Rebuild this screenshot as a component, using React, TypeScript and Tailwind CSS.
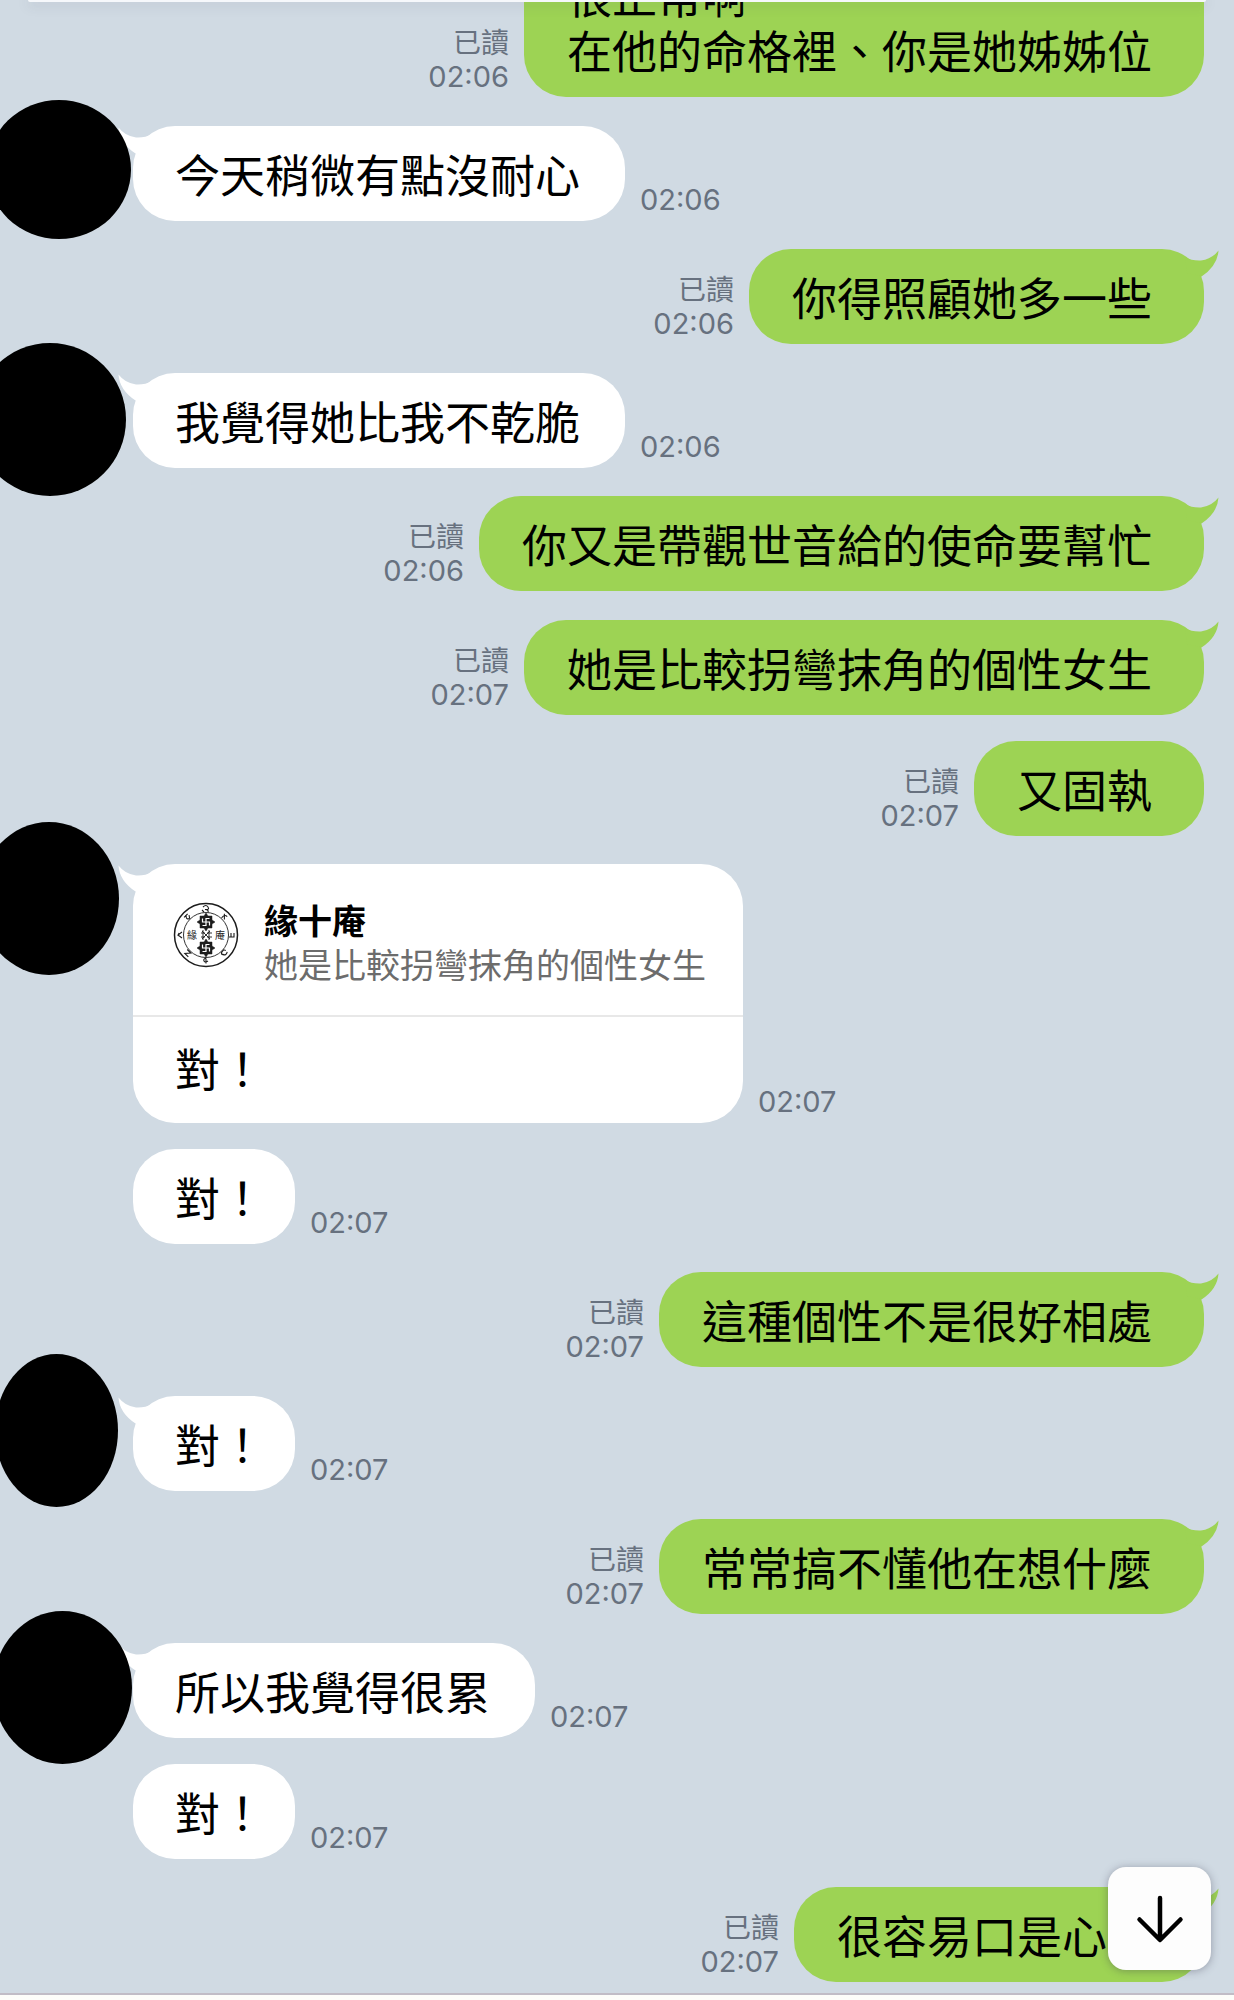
import React from "react";
import { clsx } from "clsx";

type Message = {
  text: string;
  time: string;
  mine?: boolean;
  tail?: boolean;
  gap?: string;
  avatar?: string;
  short?: boolean;
  quote?: { name: string; text: string };
};

const messages: Message[] = [
  { mine: true, text: "很正常啊\n在他的命格裡、你是她姊姊位", time: "02:06" },
  {
    text: "今天稍微有點沒耐心",
    time: "02:06",
    tail: true,
    gap: "mt-[29px]",
    avatar: "-top-[26px] -left-[13px] w-[144px] h-[139px]",
  },
  { mine: true, text: "你得照顧她多一些", time: "02:06", tail: true, gap: "mt-7" },
  {
    text: "我覺得她比我不乾脆",
    time: "02:06",
    tail: true,
    gap: "mt-[29px]",
    avatar: "-top-[30px] -left-[26px] w-[152px] h-[153px]",
  },
  { mine: true, text: "你又是帶觀世音給的使命要幫忙", time: "02:06", tail: true, gap: "mt-7" },
  { mine: true, text: "她是比較拐彎抹角的個性女生", time: "02:07", tail: true, gap: "mt-[29px]" },
  { mine: true, text: "又固執", time: "02:07", gap: "mt-[26px]" },
  {
    text: "對！",
    time: "02:07",
    tail: true,
    gap: "mt-7",
    avatar: "-top-[42px] -left-[21px] w-[140px] h-[153px]",
    quote: { name: "緣十庵", text: "她是比較拐彎抹角的個性女生" },
  },
  { text: "對！", time: "02:07", gap: "mt-[26px]", short: true },
  { mine: true, text: "這種個性不是很好相處", time: "02:07", tail: true, gap: "mt-7" },
  {
    text: "對！",
    time: "02:07",
    tail: true,
    gap: "mt-[29px]",
    short: true,
    avatar: "-top-[42px] -left-[5px] w-[123px] h-[153px]",
  },
  { mine: true, text: "常常搞不懂他在想什麼", time: "02:07", tail: true, gap: "mt-7" },
  {
    text: "所以我覺得很累",
    time: "02:07",
    tail: true,
    gap: "mt-[29px]",
    avatar: "-top-[32px] -left-[7px] w-[139px] h-[153px]",
  },
  { text: "對！", time: "02:07", gap: "mt-[26px]", short: true },
  { mine: true, text: "很容易口是心非", time: "02:07", tail: true, gap: "mt-7" },
];

function Tail({ mine }: { mine?: boolean }) {
  return (
    <svg
      aria-hidden="true"
      viewBox="0 0 40 32"
      className={clsx(
        "absolute top-0 h-8 w-10",
        mine ? "-right-[15px] text-[#9dd354]" : "-left-[15px] -scale-x-100 text-white",
      )}
    >
      <path d="M6 8 Q13 12 22 11.5 Q33 10 39.5 1.5 Q38.500 17 22.500 27.500 L8 24 Z" fill="currentColor" />
    </svg>
  );
}

const sealMarks = [
  "M30 5q3 -3 5 0t-3 2.500q4 0 3 3M31 10l-2 -2",
  "M31 5l4 4M35 5q-4 0 -3 5",
  "M31 5h4v5M31 8h4",
  "M30 6q3 -2 5 1t-4 3l-1 -2M34 6l1.500 3",
  "M33 4.500v5M31 7q3 -2 4 0t-2 3",
  "M30 5h5l-4 4.500h5",
  "M30 9l3 -4l3 4M32 5l3 1",
  "M30 5h5M33 5q-4 3 0 4.500M35 7l-2 3",
];

function Seal() {
  return (
    <svg role="img" aria-label="緣十庵" viewBox="0 0 66 66" className="mt-0.5 size-[66px] shrink-0">
      <g fill="none" stroke="#1c1c1c">
        <circle cx="33" cy="33" r="31.5" strokeWidth="1.5" />
        <circle cx="33" cy="33" r="22.5" strokeWidth="0.9" />
        {sealMarks.map((d, i) => (
          <path key={i} transform={`rotate(${i * 45} 33 33)`} d={d} strokeWidth="1.1" />
        ))}
        {[20, 46].map((y) => (
          <g key={y} transform={`translate(33 ${y})`}>
            <path
              d="M0 -9l2 3h4v4L9 0l-3 2v4h-4L0 9l-2 -3h-4v-4L-9 0l3 -2v-4h4z"
              fill="#1c1c1c"
              strokeWidth="0.5"
            />
            <path d="M-3.500 -3.500v3.500h7v3.500M3.500 -3.500h-3.500v7h-3.500" stroke="#fff" strokeWidth="1.200" />
          </g>
        ))}
        <path
          d="M29 29l8 8M37 29l-8 8M28 31h4M28 35h4M34 31h5M34 35h5M30 28v10M36 28v10"
          strokeWidth="0.9"
        />
      </g>
      <g fontSize="10" fill="#1c1c1c" fontFamily="'Noto Sans CJK TC', sans-serif">
        <text x="14" y="37">緣</text>
        <text x="42" y="37">庵</text>
      </g>
    </svg>
  );
}

function Bubble({ m }: { m: Message }) {
  return (
    <div
      className={clsx(
        "relative rounded-[42px]",
        m.mine ? "bg-[#9dd354]" : "bg-white",
        !m.quote && "pt-[23px] pb-[17px]",
        !m.quote && (m.mine ? "pr-[52px] pl-[43px]" : m.short ? "pr-[30px] pl-[42px]" : "pr-[45px] pl-[42px]"),
      )}
    >
      {m.tail && <Tail mine={m.mine} />}
      {m.quote && (
        <blockquote className="relative flex gap-[25px] border-b-2 border-[#e8e8e8] pt-9 pr-[37px] pb-[27px] pl-10">
          <Seal />
          <div className="text-[34px] leading-[44px]">
            <p className="font-bold text-black">{m.quote.name}</p>
            <p className="text-[#6c6c6c]">{m.quote.text}</p>
          </div>
        </blockquote>
      )}
      <p
        className={clsx(
          "relative text-[45px] leading-[55px] whitespace-pre-line text-black",
          m.quote && "pt-[26px] pr-[45px] pb-[25px] pl-[42px]",
        )}
      >
        {m.text}
      </p>
    </div>
  );
}

function Row({ m }: { m: Message }) {
  if (m.mine) {
    return (
      <li className={clsx("flex items-end justify-end gap-[15px] pr-[30px]", m.gap)}>
        <div className="flex shrink-0 flex-col items-end pb-[3px] text-[28px] leading-[34px] text-[#67717f]">
          <p>已讀</p>
          <time className="text-[29px]">{m.time}</time>
        </div>
        <Bubble m={m} />
      </li>
    );
  }
  return (
    <li className={clsx("relative flex items-end gap-[15px] pl-[133px]", m.gap)}>
      <Bubble m={m} />
      <time className="shrink-0 pb-1 text-[29px] leading-[34px] text-[#67717f]">{m.time}</time>
      {m.avatar && <span aria-hidden="true" className={clsx("absolute rounded-[50%] bg-black", m.avatar)} />}
    </li>
  );
}

export default function App() {
  return (
    <main className="relative flex min-h-screen flex-col overflow-hidden bg-[#d0dae3] font-[Inter,'Noto_Sans_CJK_TC',sans-serif]">
      <header className="absolute inset-x-0 top-0 z-10 mx-7 h-0.5 rounded-b-sm bg-[#f6f8fb] shadow-[0_2px_12px_rgba(70,70,90,0.35)]" />
      <ol className="-mt-[53px] flex grow flex-col pb-[10px]">
        {messages.map((m, i) => (
          <Row key={i} m={m} />
        ))}
      </ol>
      <button
        type="button"
        aria-label="捲動至最新訊息"
        className="absolute right-[23px] bottom-[30px] flex size-[103px] items-center justify-center rounded-[18px] bg-[#fdfdfd] shadow-[0_1px_8px_rgba(60,60,80,0.4)]"
      >
        <svg viewBox="0 0 52 52" className="size-[52px]" fill="none" stroke="#000" strokeWidth="4.5" strokeLinecap="round" strokeLinejoin="round">
          <path d="M26 5V46M5.500 26.500L26 47L46.500 26.500" />
        </svg>
      </button>
      <footer className="h-[7px] border-t-2 border-[#c1bcc6] bg-[#fdfdfa]" />
    </main>
  );
}
